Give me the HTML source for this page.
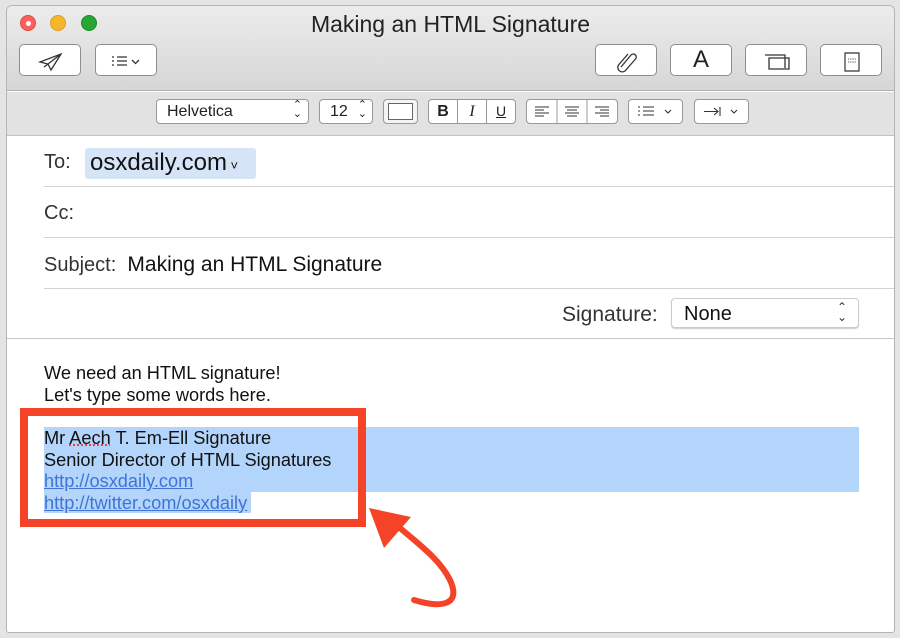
<!DOCTYPE html>
<html><head><style>
*{margin:0;padding:0;box-sizing:border-box}
body{width:900px;height:638px;background:#e4e4e4;position:relative;overflow:hidden;font-family:"Liberation Sans",sans-serif;color:#222}
.win{position:absolute;left:6px;top:5px;width:889px;height:628px;background:#fff;border-radius:6px 6px 3px 3px;overflow:hidden;border:1px solid #b5b5b5}
.tb{position:absolute;left:0;top:0;width:100%;height:85px;background:linear-gradient(#ececec,#d6d6d6);border-bottom:1px solid #b0b0b0}
.fb{position:absolute;left:0;top:86px;width:100%;height:44px;background:#e2e2e2;border-bottom:1px solid #c2c2c2}
.a{position:absolute}
.btn{position:absolute;background:#fff;border:1px solid #8e8e8e;border-radius:5px;height:32px;top:38px}
.sb{position:absolute;background:#fff;border:1px solid #999;border-radius:4px;height:25px;top:7px;font-size:16px}
.dot{position:absolute;top:9px;width:16px;height:16px;border-radius:50%}
.line{position:absolute;height:1px;background:#d2d2d2}
.lbl{position:absolute;font-size:20px;color:#333}
.body{position:absolute;font-size:18.2px;color:#111;line-height:21.5px}
</style></head><body>
<div class="win">
<div class="tb">
 <div class="dot" style="left:13px;background:#fc605c;border:1px solid #de4a45"><div style="position:absolute;left:5px;top:5px;width:5px;height:5px;border-radius:50%;background:#fff"></div></div>
 <div class="dot" style="left:43px;background:#f5b52c;border:1px solid #dc9d22"></div>
 <div class="dot" style="left:74px;background:#27a535;border:1px solid #1c8b28"></div>
 <div class="a" style="left:0;width:100%;top:5px;text-align:center;font-size:23px;color:#222">Making an HTML Signature</div>
 <div class="btn" style="left:12px;width:62px"><svg width="62" height="32" viewBox="0 0 62 32"><path d="M20 17 L41 9 L31 25 L28 19 Z M28 19 L41 9 M24 22 L28 19" fill="none" stroke="#333" stroke-width="1.3"/></svg></div>
 <div class="btn" style="left:88px;width:62px"><svg width="62" height="32" viewBox="0 0 62 32"><g stroke="#333" stroke-width="1.3"><path d="M16 12h2M16 16h2M16 20h2M21 12h10M21 16h10M21 20h10"/><path d="M36 15l3.5 3.5 3.5-3.5" fill="none"/></g></svg></div>
 <div class="btn" style="left:588px;width:62px"><svg width="62" height="32" viewBox="0 0 62 32"><path d="M25 22 L35 10 a3 3 0 0 1 4.5 4 L29 26 a4.5 4.5 0 0 1 -6.5 -6 L32 9" fill="none" stroke="#333" stroke-width="1.3"/></svg></div>
 <div class="btn" style="left:663px;width:62px;text-align:center;font-size:24px;line-height:30px;color:#222">A</div>
 <div class="btn" style="left:738px;width:62px"><svg width="62" height="32" viewBox="0 0 62 32"><path d="M19 10h20v13M23 13h20v11h-20z" fill="none" stroke="#333" stroke-width="1.3"/></svg></div>
 <div class="btn" style="left:813px;width:62px"><svg width="62" height="32" viewBox="0 0 62 32"><path d="M24 8h14v18h-14z" fill="none" stroke="#333" stroke-width="1.2"/><path d="M27 14h8M27 17h8" stroke="#555" stroke-dasharray="1.2 1"/></svg></div>
</div>
<div class="fb">
 <div class="sb" style="left:149px;width:153px;padding-left:10px;line-height:23px">Helvetica<span style="position:absolute;right:6px;font-size:11px;top:1px;line-height:9px">⌃<br>⌄</span></div>
 <div class="sb" style="left:312px;width:54px;padding-left:10px;line-height:23px">12<span style="position:absolute;right:5px;font-size:11px;top:1px;line-height:9px">⌃<br>⌄</span></div>
 <div class="a" style="left:376px;top:7px;width:35px;height:25px;border:1px solid #999;border-radius:4px;background:#f4f4f4"><div style="margin:3px 4px;height:17px;border:1px solid #666;background:#fff"></div></div>
 <div class="sb" style="left:421px;width:88px;display:flex;line-height:23px"><div style="flex:1;text-align:center;font-weight:bold;border-right:1px solid #999">B</div><div style="flex:1;text-align:center;font-style:italic;font-family:'Liberation Serif';border-right:1px solid #999">I</div><div style="flex:1;text-align:center;text-decoration:underline;font-size:14px">U</div></div>
 <div class="sb" style="left:519px;width:92px;display:flex"><svg width="92" height="23"><g stroke="#333"><path d="M8 7h14M8 10h9M8 13h14M8 16h9M38 7h14M40 10h10M38 13h14M40 16h10M68 7h14M73 10h9M68 13h14M73 16h9"/><path d="M30 0v23M60 0v23" stroke="#999"/></g></svg></div>
 <div class="sb" style="left:621px;width:55px"><svg width="55" height="23"><g stroke="#333" stroke-width="1.1"><path d="M9 7h2M9 11h2M9 15h2M14 7h11M14 11h11M14 15h11"/><path d="M36 10l3 3 3-3" fill="none"/></g></svg></div>
 <div class="sb" style="left:687px;width:55px"><svg width="55" height="23"><g stroke="#333" stroke-width="1.1" fill="none"><path d="M9 11.5h14M19 8l4 3.5-4 3.5M25 7v9"/><path d="M36 10l3 3 3-3"/></g></svg></div>
</div>
<div class="lbl" style="left:37px;top:145px">To:</div>
<div class="a" style="left:78px;top:142px;width:171px;height:31px;background:#d5e5f7;border-radius:3px"></div>
<div class="lbl" style="left:83px;top:143px;font-size:24px;color:#111">osxdaily.com<span style="font-size:13px"> ˅</span></div>
<div class="line" style="left:37px;right:0;top:180px"></div>
<div class="lbl" style="left:37px;top:196px">Cc:</div>
<div class="line" style="left:37px;right:0;top:231px"></div>
<div class="lbl" style="left:37px;top:247px">Subject:&nbsp; <span style="color:#111;font-size:21px">Making an HTML Signature</span></div>
<div class="line" style="left:37px;right:0;top:282px"></div>
<div class="lbl" style="left:555px;top:297px;font-size:21px">Signature:</div>
<div class="a" style="left:664px;top:292px;width:188px;height:30px;border:1px solid #ccc;border-radius:4px;background:#fff;box-shadow:0 1px 1px #ccc"></div>
<div class="lbl" style="left:677px;top:297px;color:#111">None</div>
<div class="a" style="left:830px;top:296px;font-size:12px;line-height:10px;color:#333">⌃<br>⌄</div>
<div class="line" style="left:0;right:0;top:332px;background:#c8c8c8"></div>
<div class="body" style="left:37px;top:357px">We need an HTML signature!<br>Let's type some words here.</div>
<div class="a" style="left:37px;top:421px;width:815px;height:65px;background:#b3d5fb"></div>
<div class="a" style="left:37px;top:486px;width:207px;height:21px;background:#b3d5fb"></div>
<div class="body" style="left:37px;top:422px">Mr <span style="text-decoration:underline dotted #d33">Aech</span> T. Em-Ell Signature<br>Senior Director of HTML Signatures<br><span style="color:#3f74d6;text-decoration:underline">http://osxdaily.com</span><br><span style="color:#3f74d6;text-decoration:underline">http://twitter.com/osxdaily</span></div>
</div>
<svg class="a" style="left:0;top:0" width="900" height="638">
<rect x="24" y="412" width="338" height="111" fill="none" stroke="#f44327" stroke-width="8"/>
<path d="M414 600 C440 608 462 606 450 580 C440 560 420 545 400 528" fill="none" stroke="#f44327" stroke-width="6" stroke-linecap="round"/>
<path d="M369 508 L411 517 L384 548 Z" fill="#f44327"/>
</svg>
</body></html>
